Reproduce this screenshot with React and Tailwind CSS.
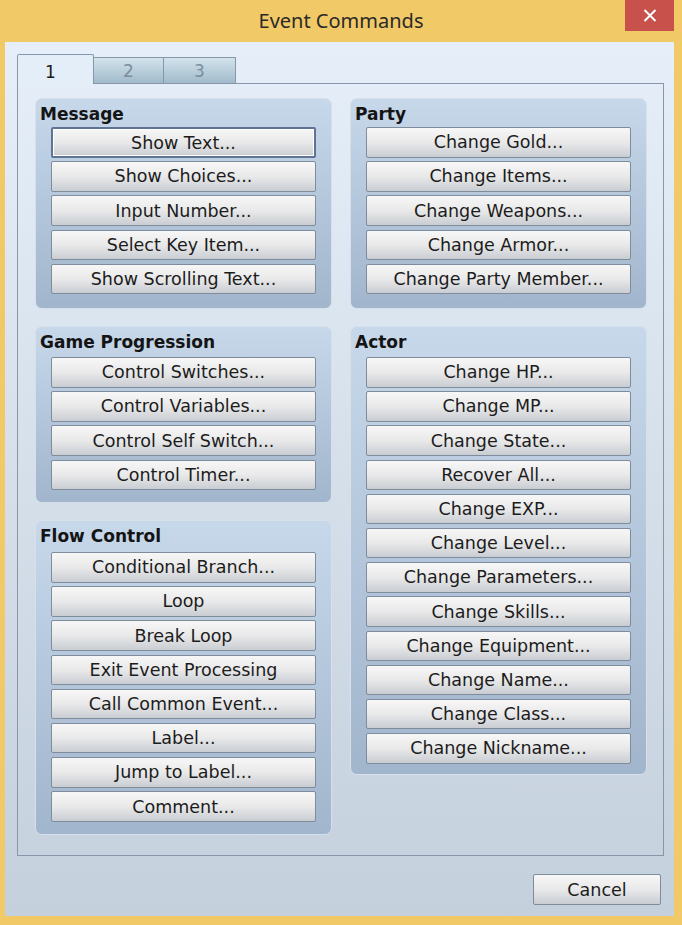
import React from 'react';

const groupsLeft = [
  { title: 'Message', h: 'h-[211px]', mt: 'mt-[3px]', items: ['Show Text...', 'Show Choices...', 'Input Number...', 'Select Key Item...', 'Show Scrolling Text...'] },
  { title: 'Game Progression', h: 'h-[177px]', mt: 'mt-[5px]', items: ['Control Switches...', 'Control Variables...', 'Control Self Switch...', 'Control Timer...'] },
  { title: 'Flow Control', h: 'h-[315px]', mt: 'mt-[6px]', items: ['Conditional Branch...', 'Loop', 'Break Loop', 'Exit Event Processing', 'Call Common Event...', 'Label...', 'Jump to Label...', 'Comment...'] },
];

const groupsRight = [
  { title: 'Party', h: 'h-[211px]', mt: 'mt-[3px]', items: ['Change Gold...', 'Change Items...', 'Change Weapons...', 'Change Armor...', 'Change Party Member...'] },
  { title: 'Actor', h: 'h-[449px]', mt: 'mt-[5px]', items: ['Change HP...', 'Change MP...', 'Change State...', 'Recover All...', 'Change EXP...', 'Change Level...', 'Change Parameters...', 'Change Skills...', 'Change Equipment...', 'Change Name...', 'Change Class...', 'Change Nickname...'] },
];

function CmdButton({ label, focused }) {
  return (
    <button
      className={
        'w-[265px] h-[30.5px] shrink-0 rounded-[2px] text-[17.5px] leading-[28px] text-[#1c1c1c] text-center bg-gradient-to-b from-[#f7f7f7] via-[#e9e9ea] to-[#c9cdd2] ' +
        (focused
          ? 'border-2 border-[#5f7392] shadow-[inset_0_0_0_1px_#ffffff]'
          : 'border border-[#7f8c9b]')
      }
    >
      {label}
    </button>
  );
}

function Group({ title, items, h, mt, focusFirst }) {
  return (
    <div className={'w-[297px] rounded-[7px] border border-[#d6e0eb] bg-gradient-to-b from-[#c7d8ea] to-[#a1b5cc] pt-[5px] ' + h}>
      <div className="pl-[4px] h-[20px] leading-[20px] text-[17px] font-bold text-[#141414]">{title}</div>
      <div className={'pl-[15px] flex flex-col gap-[3.7px] ' + mt}>
        {items.map((it, i) => (
          <CmdButton key={it} label={it} focused={focusFirst && i === 0} />
        ))}
      </div>
    </div>
  );
}

export default function App() {
  return (
    <div className="w-[682px] h-[925px] bg-[#f1c967] flex flex-col font-['DejaVu_Sans',sans-serif]">
      {/* title bar */}
      <div className="relative h-[42px] flex items-center justify-center">
        <span className="font-['Noto_Sans',sans-serif] text-[20px] text-[#2a2a2a]">Event Commands</span>
        <div className="absolute right-[8px] top-0 w-[49px] h-[31px] bg-[#c8514c] flex items-center justify-center">
          <svg width="14" height="13" viewBox="0 0 14 13">
            <path d="M1.5 1 L12.5 12 M12.5 1 L1.5 12" stroke="#ffffff" strokeWidth="2" />
          </svg>
        </div>
      </div>

      {/* client area */}
      <div className="ml-[5px] mr-[8px] mb-[9px] flex-1 flex flex-col bg-gradient-to-b from-[#e6eff9] to-[#c4d0dc]">
        <div className="pt-[12px] pl-[12px] pr-[10px]">
          {/* tab strip */}
          <div className="flex items-end h-[30px]">
            <div className="w-[77px] h-[30px] border border-b-0 border-[#8796a8] rounded-t-[2px] bg-[#e4eef8] text-[17px] text-[#1a1a1a] pl-[27px] pt-[7px] leading-[20px]">
              1
            </div>
            <div className="w-[70px] h-[27px] border-t border-r border-b border-[#8796a8] bg-gradient-to-b from-[#d3e3ec] to-[#a1bbcb] text-[17px] text-[#7a8e9c] text-center leading-[26px]">
              2
            </div>
            <div className="w-[72px] h-[27px] border-t border-r border-b border-[#8796a8] bg-gradient-to-b from-[#d3e3ec] to-[#a1bbcb] text-[17px] text-[#7a8e9c] text-center leading-[26px]">
              3
            </div>
            <div className="flex-1 h-px bg-[#8796a8]" />
          </div>
          {/* tab page */}
          <div className="h-[772px] border border-t-0 border-[#8796a8] pt-[14px] px-[17px] flex gap-[18px]">
            <div className="flex flex-col gap-[17px]">
              <Group {...groupsLeft[0]} focusFirst />
              <Group {...groupsLeft[1]} />
              <Group {...groupsLeft[2]} />
            </div>
            <div className="flex flex-col gap-[17px]">
              <Group {...groupsRight[0]} />
              <Group {...groupsRight[1]} />
            </div>
          </div>
        </div>

        {/* footer */}
        <div className="flex justify-end pt-[18px] pr-[13px]">
          <button className="w-[128px] h-[31px] rounded-[2px] border border-[#7f8c9b] bg-gradient-to-b from-[#f7f7f7] via-[#e9e9ea] to-[#c9cdd2] text-[17.5px] text-[#1c1c1c] leading-[28px]">
            Cancel
          </button>
        </div>
      </div>
    </div>
  );
}
